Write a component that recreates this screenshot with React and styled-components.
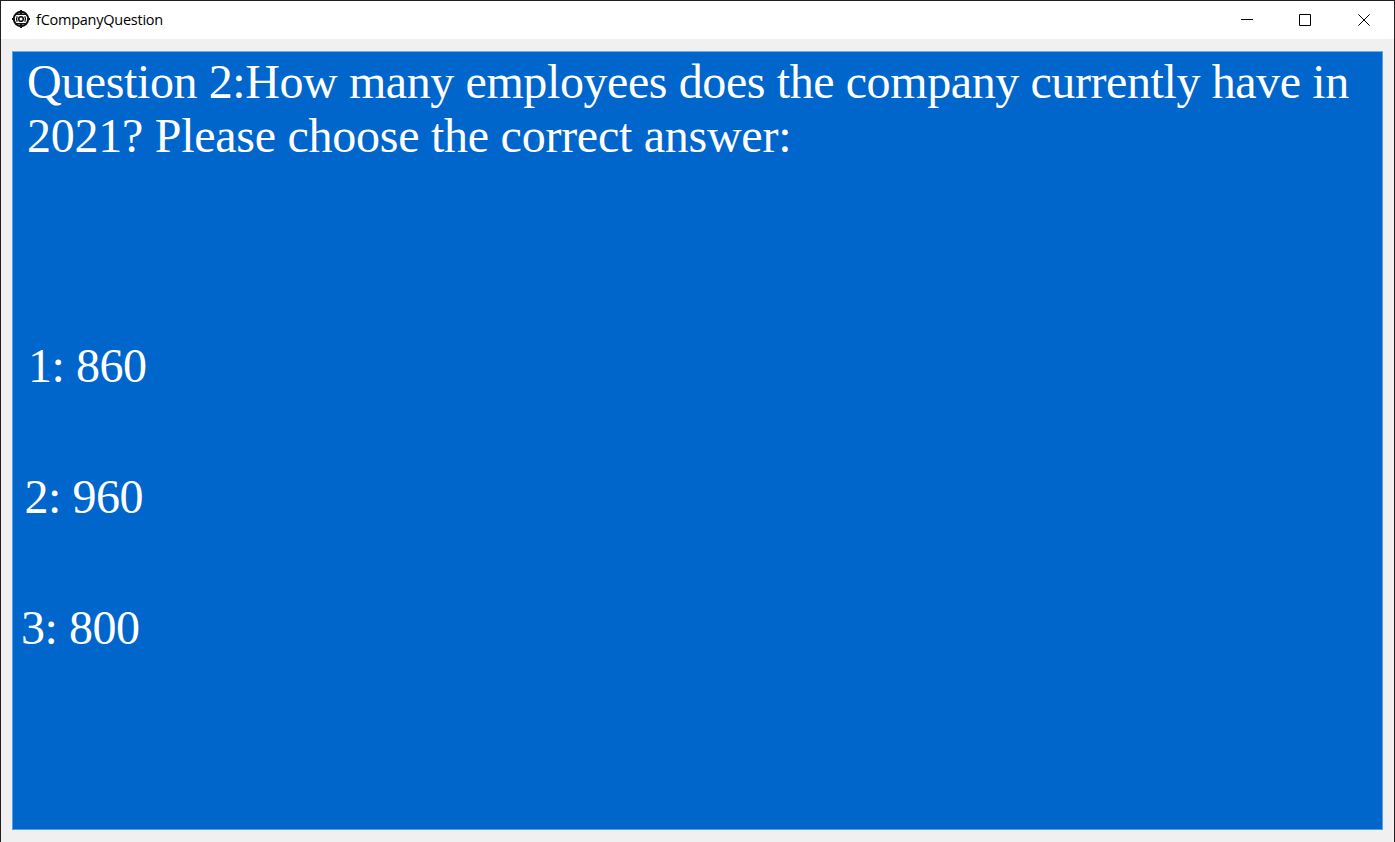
import React from 'react';
import styled, { createGlobalStyle } from 'styled-components';

const GlobalStyle = createGlobalStyle`
  * { box-sizing: border-box; }
  html, body { margin: 0; padding: 0; overflow: hidden; }
`;

const Window = styled.div`
  width: 1395px;
  height: 842px;
  display: flex;
  flex-direction: column;
  background: #f0f0f0;
  border: 1px solid #231f20;
  border-bottom: 0;
`;

const TitleBar = styled.header`
  height: 38px;
  flex: none;
  display: flex;
  align-items: center;
  background: #fff;
  padding-left: 11px;
`;

const AppIcon = styled.svg`
  width: 18px;
  height: 18px;
  flex: none;
  margin-top: -2px;
`;

const Title = styled.span`
  flex: 1;
  margin: -1px 0 0 6px;
  font: 14.5px/20px 'Open Sans', 'Noto Sans', sans-serif;
  letter-spacing: -0.25px;
  color: #000;
  white-space: nowrap;
`;

const Controls = styled.div`
  display: flex;
`;

const ControlButton = styled.button`
  width: ${(p) => p.$width}px;
  height: 38px;
  padding: 0;
  border: 0;
  background: transparent;
  display: flex;
  align-items: center;
  justify-content: center;

  svg {
    width: 12px;
    height: 12px;
    fill: none;
    stroke: #000;
    stroke-width: 1;
  }
`;

const Panel = styled.main`
  flex: none;
  width: 1371px;
  height: 779px;
  margin: 12px 0 0 11px;
  background: #0066cc;
  border: 1px solid #5a9fe3;
  border-top-color: #78aadd;
  color: #fff;
  font-family: 'Liberation Serif', 'Times New Roman', serif;
  font-size: 48px;
  line-height: 54px;
`;

const Question = styled.p`
  margin: 3px 0 0;
  padding-left: 14px;
  height: 284px;
`;

const QuestionLine = styled.span`
  display: block;
  white-space: nowrap;
  letter-spacing: ${(p) => p.$spacing}px;
`;

const Answers = styled.ol`
  list-style: none;
  margin: 0;
  padding: 0;
  letter-spacing: -0.45px;
`;

const Answer = styled.li`
  height: 131px;
  padding-left: ${(p) => p.$indent}px;
`;

const answers = [
  { text: '1: 860', indent: 15 },
  { text: '2: 960', indent: 11.5 },
  { text: '3: 800', indent: 8 },
];

export default function App() {
  return (
    <>
      <GlobalStyle />
      <Window>
        <TitleBar>
          <AppIcon viewBox="0 0 18 18" fill="none" stroke="#111">
            <circle cx="9" cy="9" r="7.2" strokeWidth="2" />
            <path d="M9 0v4M9 14v4M0 9h2.5M15.5 9h2.5" strokeWidth="2" />
            <path d="M4 4.2h10M4 13.8h10" strokeWidth="1.4" />
            <path d="M5.2 6.2Q3.8 9 5.2 11.8M12.8 6.2Q14.2 9 12.8 11.8" strokeWidth="1.3" />
            <circle cx="9" cy="9" r="2.3" strokeWidth="1.6" />
          </AppIcon>
          <Title>fCompanyQuestion</Title>
          <Controls>
            <ControlButton $width={58} aria-label="Minimize">
              <svg viewBox="0 0 12 12"><path d="M0 5.5h12" /></svg>
            </ControlButton>
            <ControlButton $width={58} aria-label="Maximize">
              <svg viewBox="0 0 12 12"><path d="M.5.5h11v11H.5z" /></svg>
            </ControlButton>
            <ControlButton $width={60} aria-label="Close">
              <svg viewBox="0 0 12 12"><path d="M.3.3l11.4 11.4M11.7.3L.3 11.7" /></svg>
            </ControlButton>
          </Controls>
        </TitleBar>
        <Panel>
          <Question>
            <QuestionLine $spacing={-0.405}>Question 2:How many employees does the company currently have in</QuestionLine>
            <QuestionLine $spacing={-0.26}>2021? Please choose the correct answer:</QuestionLine>
          </Question>
          <Answers>
            {answers.map((a) => (
              <Answer key={a.text} $indent={a.indent}>{a.text}</Answer>
            ))}
          </Answers>
        </Panel>
      </Window>
    </>
  );
}
